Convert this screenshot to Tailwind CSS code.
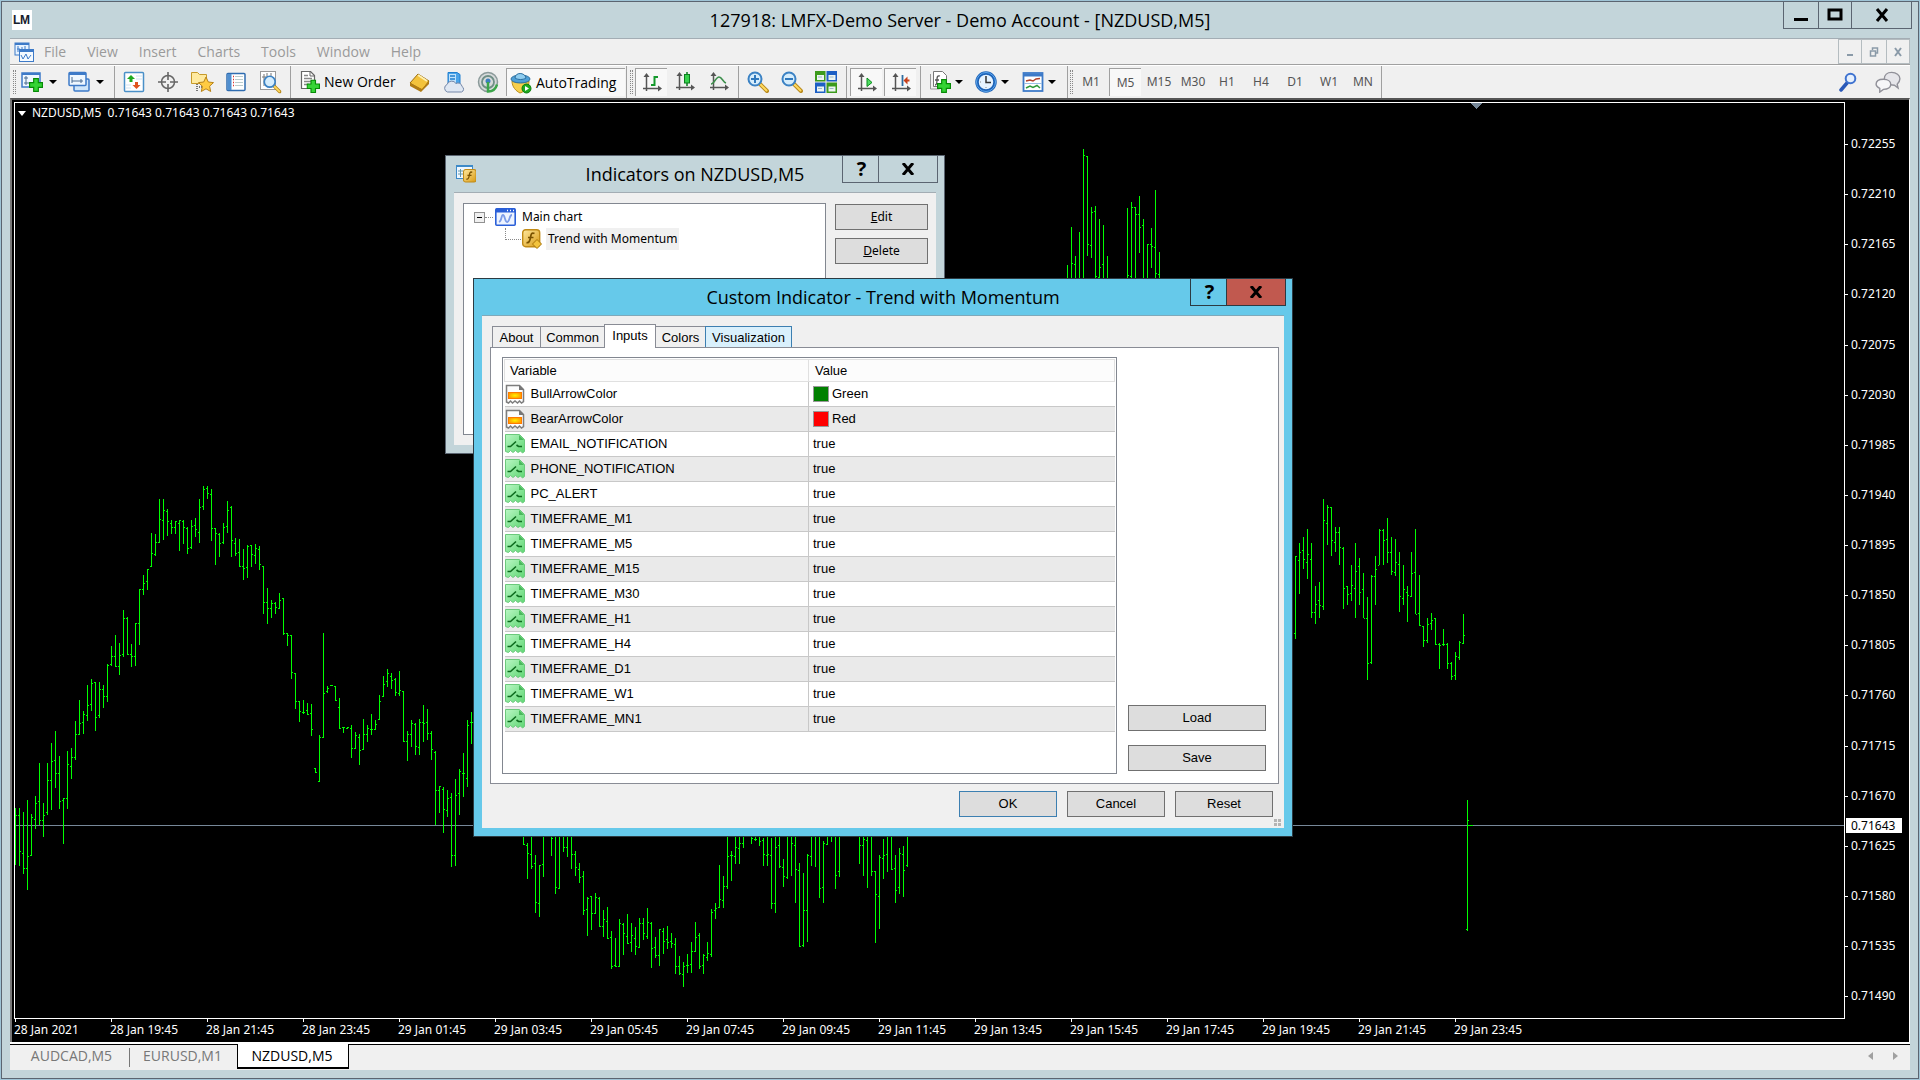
<!DOCTYPE html>
<html lang="en">
<head>
  <meta charset="UTF-8" />
  <meta name="viewport" content="width=device-width, initial-scale=1.0" />
  <title>127918: LMFX-Demo Server - Demo Account - [NZDUSD,M5]</title>
  <script src="https://cdn.jsdelivr.net/npm/@tailwindcss/browser@4"></script>
</head>
<body class="h-screen overflow-hidden bg-[#9fc4d6] p-px font-['Open_Sans',sans-serif] text-black">

  <!-- Shared icon shapes -->
  <svg class="absolute h-0 w-0">
    <defs>
      <linearGradient id="gold" x1="0" y1="0" x2="1" y2="1"><stop offset="0" stop-color="#ffe9a0" /><stop offset="1" stop-color="#d99a12" /></linearGradient>
      <linearGradient id="leaf" x1="0" y1="0" x2="1" y2="1"><stop offset="0" stop-color="#b9f7c4" /><stop offset="1" stop-color="#5fd673" /></linearGradient>
      <radialGradient id="hot"><stop offset="0" stop-color="#fff200" /><stop offset="1" stop-color="#ff9d00" /></radialGradient>
    </defs>
    <symbol id="plus" viewBox="0 0 12 12"><path d="M4 .5h4V4h3.500v4H8v3.500H4V8H.5V4H4z" fill="#35d435" stroke="#078a07" /></symbol>
    <symbol id="axes" viewBox="0 0 20 20"><path d="M4.500 3v15M1 15.500h17" stroke="#555" stroke-width="1.500" /><path d="M4.500 0l3 4h-6zM20 15.500l-4 3v-6z" fill="#555" /></symbol>
    <symbol id="glass" viewBox="0 0 22 22"><path d="M13 13l7 7" stroke="#b98a1c" stroke-width="4" stroke-linecap="round" /><path d="M13.500 13.500l6 6" stroke="#ffd95e" stroke-width="2" stroke-linecap="round" /><circle cx="8" cy="8" r="6.500" fill="#d6edfc" stroke="#3b82c4" stroke-width="2" /></symbol>
    <symbol id="color-input" viewBox="0 0 20 20"><path d="M1.500 1.500h13l4 4v12l-2 1.500-2-2-2 2-2.500-2-2.500 2-2-2-2 2-2-1z" fill="#fdfdfd" stroke="#7d7d7d" stroke-width="1.500" /><path d="M14 1v5h5z" fill="#777" /><rect x="3.500" y="8.500" width="13" height="6" fill="url(#hot)" stroke="#ff7a00" /></symbol>
    <symbol id="bool-input" viewBox="0 0 20 20"><path d="M.5.5h14l5 5v12l-2 1.500-2-2-2.500 1.500-2.500-2-2.500 2-2.500-2-2 2-3-1z" fill="url(#leaf)" stroke="#6cc97c" /><path d="M14 1v5h5z" fill="#49b95c" /><path d="M2.500 12.500h3l5.500-5M11.500 11l2 1.500h3.500" fill="none" stroke="#0d6b1e" stroke-width="1.600" /></symbol>
    <symbol id="fx" viewBox="0 0 20 20"><rect x=".7" y=".7" width="17" height="17" rx="3" fill="url(#gold)" stroke="#c08a16" stroke-width="1.400" /><path d="M12.500 4.500c-3-1.500-3.500 1-4 4s-1.500 6-4 5M6 8.500h5.500" fill="none" stroke="#7a5200" stroke-width="1.700" /></symbol>
  </svg>

  <!-- Terminal window -->
  <main class="flex h-full flex-col border border-[#5b6571] bg-[#c3d5da] px-2 pb-2">
    <header class="relative flex h-9 shrink-0 items-center justify-center">
      <svg class="absolute top-2 left-0.5 h-5 w-5" viewBox="0 0 20 20"><rect width="20" height="20" fill="#fff" /><text x="1" y="14" font-family="Liberation Sans" font-weight="bold" font-size="12" fill="#16202c">L</text><text x="8" y="14" font-family="Liberation Sans" font-weight="bold" font-size="12" fill="#16202c">M</text></svg>
      <h1 class="text-lg leading-9">127918: LMFX-Demo Server - Demo Account - [NZDUSD,M5]</h1>
      <div class="absolute -top-px -right-0.5 flex border border-[#5b6571]">
        <button aria-label="Minimize" class="grid h-[26px] w-[35px] place-items-center border-r border-[#5b6571]"><svg class="h-4 w-4" viewBox="0 0 16 16"><path d="M1 11h14v3H1z" /></svg></button>
        <button aria-label="Maximize" class="grid h-[26px] w-[33px] place-items-center border-r border-[#5b6571]"><svg class="h-4 w-4" viewBox="0 0 16 16"><path d="M2 3h12v9H2z" fill="none" stroke="#000" stroke-width="3" /></svg></button>
        <button aria-label="Close" class="grid h-[26px] w-[59px] place-items-center"><svg class="h-4 w-4" viewBox="0 0 16 16"><path d="M3 2l10 12M13 2L3 14" stroke="#000" stroke-width="3" /></svg></button>
      </div>
    </header>

    <section class="flex min-h-0 flex-1 flex-col border-t border-[#a3adb4] bg-[#f0f0f0]">
      <!-- Menu -->
      <nav class="flex h-[26px] shrink-0 items-center border-b border-[#a0a0a0] pl-1 text-sm text-[#9a9a9a]">
        <svg class="mr-2 h-5 w-5" viewBox="0 0 20 20"><rect x="1" y="1" width="14" height="12" fill="#e8f3ff" stroke="#3d7ac8" /><path d="M1 2h14" stroke="#3d7ac8" stroke-width="2" /><path d="M4 4v6M8 5v5M11 4v5M3 7h3M7 8h3" stroke="#3d7ac8" /><rect x="5.500" y="7.500" width="14" height="12" fill="#f4faff" stroke="#3d7ac8" /><path d="M5 9h15" stroke="#3d7ac8" stroke-width="2" /><path d="M7 13l2 4 3-5 2 5 3-4" fill="none" stroke="#3d7ac8" /></svg>
        <div class="flex items-center gap-[21px]">
          <a href="#" class="pl-0.5">File</a><a href="#">View</a><a href="#">Insert</a><a href="#">Charts</a><a href="#">Tools</a><a href="#">Window</a><a href="#">Help</a>
        </div>
        <div class="ml-auto flex self-stretch text-[#8a9aa8]">
          <button aria-label="Minimize chart" class="grid w-6 place-items-center border border-[#b4bcc0]"><svg class="h-2.5 w-2.5" viewBox="0 0 10 10"><path d="M2 7h6v2H2z" fill="currentColor" /></svg></button>
          <button aria-label="Restore chart" class="grid w-6 place-items-center border-y border-[#b4bcc0]"><svg class="h-2.5 w-2.5" viewBox="0 0 10 10"><path d="M3.500 3V1h5v5h-2M1.500 4h5v5h-5z" fill="none" stroke="currentColor" stroke-width="1.500" /></svg></button>
          <button aria-label="Close chart" class="grid w-6 place-items-center border border-[#b4bcc0]"><svg class="h-2.5 w-2.5" viewBox="0 0 10 10"><path d="M2 1l6 8M8 1L2 9" stroke="currentColor" stroke-width="2" /></svg></button>
        </div>
      </nav>

      <!-- Toolbar -->
      <div class="flex h-[33px] shrink-0 items-stretch border-t border-white text-sm">
        <i class="mx-[3px] my-1 w-[3px] border-x border-dotted border-[#888]"></i>
        <button aria-label="New chart" class="flex w-[47px] items-center gap-1 pl-0.5"><svg class="h-[22px] w-[22px]" viewBox="0 0 22 22"><rect x="1" y="2" width="18" height="14" fill="#eef7ff" stroke="#3d7ac8" stroke-width="1.500" /><path d="M1 3h18" stroke="#3d7ac8" stroke-width="2" /><path d="M5 5v9M3 12h10M3 7h4" stroke="#4a6d92" /><use href="#plus" x="8" y="7" width="14" height="14" /></svg><svg class="ml-0.5 h-1 w-2" viewBox="0 0 8 4"><path d="M0 0h8L4 4z" /></svg></button>
        <button aria-label="Profiles" class="flex w-[47px] items-center gap-1 pl-0.5"><svg class="h-[22px] w-[22px]" viewBox="0 0 22 22"><rect x="6" y="8" width="15" height="12" rx="1" fill="#cfe6fa" stroke="#3d7ac8" stroke-width="1.500" /><rect x="1" y="1.500" width="17" height="13" rx="1" fill="#eef7ff" stroke="#3d7ac8" stroke-width="1.500" /><path d="M1 3h17" stroke="#3d7ac8" stroke-width="2" /><path d="M4 6v6M4 10h11M13 8v4" stroke="#4a6d92" /></svg><svg class="ml-0.5 h-1 w-2" viewBox="0 0 8 4"><path d="M0 0h8L4 4z" /></svg></button>
        <i class="mr-0.5 ml-px w-px bg-[#a0a0a0]"></i>
        <button aria-label="Market Watch" class="grid w-[34px] place-items-center"><svg class="h-[22px] w-[22px]" viewBox="0 0 22 22"><rect x="1.500" y="1.500" width="19" height="19" rx="1" fill="#fff" stroke="#4a90c8" stroke-width="1.500" /><path d="M13 5h6M13 8h6M3 14h5M3 17h5" stroke="#cfe3f2" /><path d="M8 4l4 4H9.500v3h-3V8H4z" fill="#1faa1f" /><path d="M13.500 18l-4-4H12v-3h3v3h2.500z" fill="#e0531c" /></svg></button>
        <button aria-label="Crosshair" class="grid w-[34px] place-items-center"><svg class="h-5 w-5" viewBox="0 0 20 20"><circle cx="10" cy="10" r="6.500" fill="none" stroke="#666" stroke-width="1.500" /><path d="M10 0v8M10 12v8M0 10h8M12 10h8" stroke="#666" stroke-width="1.600" /></svg></button>
        <button aria-label="Navigator" class="grid w-[34px] place-items-center"><svg class="h-6 w-6" viewBox="0 0 24 24"><path d="M1.500 2.500h6l2 2h7v9h-15z" fill="#ffeaa0" stroke="#c79a2a" /><path d="M7 14v7M9 17h3" stroke="#777" stroke-dasharray="1 1" stroke-width="2" /><path d="M16 7l2.300 5 5.200.600-3.900 3.600 1.100 5.300-4.700-2.700-4.700 2.700 1.100-5.300-3.900-3.600 5.200-.6z" fill="#ffcb42" stroke="#b8841a" /></svg></button>
        <button aria-label="Terminal" class="grid w-[34px] place-items-center"><svg class="h-5 w-5" viewBox="0 0 20 20"><rect x="1" y="1.500" width="18" height="17" rx="1" fill="#fff" stroke="#2f6cb0" stroke-width="1.500" /><path d="M3.500 2v16" stroke="#4f8fd0" stroke-width="4" /><path d="M7 4.500h1M7 7.500h1M7 10.500h1M7 13.500h1" stroke="#d33" stroke-width="1.500" /><path d="M9 4.500h8M9 7.500h8M9 10.500h8M9 13.500h8" stroke="#bcc" /></svg></button>
        <button aria-label="Strategy Tester" class="grid w-[34px] place-items-center"><svg class="h-6 w-6" viewBox="0 0 24 24"><rect x="2.500" y="1.500" width="15" height="18" fill="#fff" stroke="#999" /><path d="M6 4v12M9 3v6M13 3v5M4 7h4" stroke="#777" /><g transform="translate(5 5) scale(.84)"><use href="#glass" width="22" height="22" /></g></svg></button>
        <i class="mr-0.5 ml-[3px] w-px bg-[#a0a0a0]"></i>
        <button class="flex w-[110px] items-center gap-1 pl-[7px] whitespace-nowrap"><svg class="h-[22px] w-5 shrink-0" viewBox="0 0 20 22"><path d="M1.500.5h9l4 4v13h-13z" fill="#fff" stroke="#666" stroke-width="1.200" /><path d="M10 1v4h4" fill="none" stroke="#666" /><path d="M4 4.500h4M4 7.500h8M4 10.500h8M4 13.500h5" stroke="#888" stroke-width="1.500" /><use href="#plus" x="6.500" y="8.500" width="13.500" height="13.500" /></svg>New Order</button>
        <button aria-label="MetaEditor" class="grid w-[34px] place-items-center"><svg class="h-[22px] w-[22px]" viewBox="0 0 22 22"><path d="M1 12l8-9 11 7-7 9z" fill="#f3c33c" stroke="#9a6c10" /><path d="M1 12v3l11 6 8-8v-3l-7 8z" fill="#b07c14" /><path d="M9 4l9 6" stroke="#fff0b0" stroke-width="2" /></svg></button>
        <button aria-label="Virtual Hosting" class="grid w-[34px] place-items-center"><svg class="h-[22px] w-[22px]" viewBox="0 0 22 22"><path d="M5 1.500h9l3 2v11H5z" fill="#4aa3e8" stroke="#1f7fd0" /><path d="M6 3h7v9H6z" fill="#bfe2fb" /><path d="M7 5h5M7 8h5" stroke="#1f7fd0" stroke-width="1.500" /><path d="M4.500 21a4 4 0 01-.5-7.500 5 5 0 019-1 4 4 0 016 3 3 3 0 01-.5 5.500z" fill="#dfe7f2" stroke="#7487a8" /></svg></button>
        <button aria-label="Signals" class="grid w-[34px] place-items-center"><svg class="h-[22px] w-[22px]" viewBox="0 0 22 22"><circle cx="11" cy="11" r="9.500" fill="#d7dadb" stroke="#8b9a9a" stroke-width="1.500" /><circle cx="11" cy="11" r="6" fill="none" stroke="#6f8f86" stroke-width="1.800" /><circle cx="11" cy="10" r="2.500" fill="#3d7fbf" /><path d="M11 11v9.500c5 0 8-3 9-7" fill="none" stroke="#3ba54a" stroke-width="2.500" /></svg></button>
        <button class="my-0.5 ml-px flex w-[119px] items-center gap-1 border-t border-l border-[#a0a0a0] bg-[#f8f8f8] pl-[3px] whitespace-nowrap"><svg class="h-6 w-[22px] shrink-0" viewBox="0 0 22 24"><path d="M2 10c3 2 15 2 17 0 0 6-3 10-9 12-4-2-8-6-8-12z" fill="#f6cf4c" stroke="#b98f1f" /><ellipse cx="10.500" cy="8" rx="9.500" ry="4" fill="#4d9fd6" stroke="#2c6f9f" /><path d="M5 7c0-6 10-6 11 0-3 2-8 2-11 0z" fill="#8fcdf0" stroke="#2c6f9f" /><circle cx="16.500" cy="17.500" r="4.500" fill="#1faa1f" stroke="#0c7d0c" /><path d="M15 15l4 2.500-4 2.500z" fill="#fff" /></svg>AutoTrading</button>
        <i class="mr-0.5 ml-px w-px bg-[#a0a0a0]"></i>
        <i class="mx-px my-1 w-[3px] border-x border-dotted border-[#888]"></i>
        <button aria-label="Bar chart" class="my-0.5 mr-px ml-px grid w-8 place-items-center border-t border-l border-[#a0a0a0] bg-[#f8f8f8]"><svg class="h-5 w-5" viewBox="0 0 20 20"><use href="#axes" /><path d="M12.500 3v10M12.500 4H16M9 12h3.500" stroke="#159a2c" stroke-width="2" /></svg></button>
        <button aria-label="Candlesticks" class="grid w-[34px] place-items-center"><svg class="h-5 w-5" viewBox="0 0 20 20"><use href="#axes" /><path d="M12 0v14" stroke="#0a7d1e" stroke-width="1.500" /><rect x="9.500" y="2.500" width="5" height="8.500" fill="#36d14c" stroke="#0a7d1e" /></svg></button>
        <button aria-label="Line chart" class="grid w-[34px] place-items-center"><svg class="h-5 w-5" viewBox="0 0 20 20"><use href="#axes" /><path d="M2 12c3 0 5-7 8-7s4 5 7 6" fill="none" stroke="#3d8f4c" stroke-width="1.600" /></svg></button>
        <i class="mr-0.5 ml-0.5 w-px bg-[#a0a0a0]"></i>
        <button aria-label="Zoom in" class="grid w-[34px] place-items-center"><svg class="h-[22px] w-[22px]" viewBox="0 0 22 22"><use href="#glass" /><path d="M8 4v8M4 8h8" stroke="#2f78bd" stroke-width="2" /></svg></button>
        <button aria-label="Zoom out" class="grid w-[34px] place-items-center"><svg class="h-[22px] w-[22px]" viewBox="0 0 22 22"><use href="#glass" /><path d="M4 8h8" stroke="#2f78bd" stroke-width="2" /></svg></button>
        <button aria-label="Tile windows" class="grid w-[34px] place-items-center"><svg class="h-[22px] w-[22px]" viewBox="0 0 22 22"><path d="M0 0h10.500v10.500H0zM11.500 11.500H22V22H11.500z" fill="#3c9a1c" /><path d="M11.500 0H22v10.500H11.500zM0 11.500h10.500V22H0z" fill="#1c5fc4" /><path d="M2 4h7v5H2zM13.500 4h7v5h-7zM2 15.500h7v5H2zM13.500 15.500h7v5h-7z" fill="#edf5f2" /><path d="M3 6h4M14.500 6h4M3 17.500h4M14.500 17.500h4" stroke="#9db8c8" /></svg></button>
        <i class="mr-0.5 ml-[3px] w-px bg-[#a0a0a0]"></i>
        <button aria-label="Auto scroll" class="mx-px my-0.5 grid w-8 place-items-center border-t border-l border-[#a0a0a0] bg-[#f8f8f8]"><svg class="h-5 w-5" viewBox="0 0 20 20"><use href="#axes" /><path d="M10 5l5 4.500-5 4z" fill="#4fdc62" stroke="#0a8d1e" /></svg></button>
        <button aria-label="Chart shift" class="mx-px my-0.5 grid w-8 place-items-center border-t border-l border-[#a0a0a0] bg-[#f8f8f8]"><svg class="h-5 w-5" viewBox="0 0 20 20"><use href="#axes" /><path d="M11.500 2v11" stroke="#2f6ca0" stroke-width="1.800" /><path d="M18.500 7.500H15" stroke="#c8401a" stroke-width="2" /><path d="M12.500 7.500l4-4v8z" fill="#c8401a" /></svg></button>
        <i class="mr-0.5 ml-[3px] w-px bg-[#a0a0a0]"></i>
        <button aria-label="Indicators" class="flex w-[46px] items-center gap-1 pl-1.5"><svg class="h-[22px] w-[22px] shrink-0" viewBox="0 0 22 22"><path d="M4.500.5h9l4 4v11h-13z" fill="#fff" stroke="#777" /><path d="M1.500 3v15h9" fill="none" stroke="#999" /><path d="M11 5c-3-1-3 2-3 4s0 5-2 5M6 9h4" fill="none" stroke="#555" stroke-width="1.300" /><use href="#plus" x="8" y="8" width="14" height="14" /></svg><svg class="h-1 w-2 shrink-0" viewBox="0 0 8 4"><path d="M0 0h8L4 4z" /></svg></button>
        <button aria-label="Periods" class="flex w-[47px] items-center gap-1 pl-1.5"><svg class="h-[22px] w-[22px] shrink-0" viewBox="0 0 22 22"><circle cx="11" cy="11" r="9" fill="#e6f3ff" stroke="#1d63b8" stroke-width="3.500" /><circle cx="11" cy="11" r="9.500" fill="none" stroke="#5fa8ee" /><path d="M11 5v6.500h5" fill="none" stroke="#333" stroke-width="1.500" /><path d="M5 11h1M11 16v1" stroke="#888" /></svg><svg class="h-1 w-2 shrink-0" viewBox="0 0 8 4"><path d="M0 0h8L4 4z" /></svg></button>
        <button aria-label="Templates" class="flex w-[47px] items-center gap-1 pl-1.5"><svg class="h-[22px] w-[22px] shrink-0" viewBox="0 0 22 22"><rect x="1.500" y="2" width="19" height="18" fill="#fff" stroke="#3d7ac8" stroke-width="1.800" /><path d="M1 4h20" stroke="#3d7ac8" stroke-width="3" /><path d="M4 10l4-1 3 1 3-2 4-.5" fill="none" stroke="#b3402a" stroke-width="1.500" /><path d="M2 12.500h18" stroke="#9cc0e4" /><path d="M4 17l4-2 3 1.500 4-2 3 2.500" fill="none" stroke="#2f9a3a" stroke-width="1.500" /></svg><svg class="h-1 w-2 shrink-0" viewBox="0 0 8 4"><path d="M0 0h8L4 4z" /></svg></button>
        <i class="mr-0.5 ml-1 w-px bg-[#a0a0a0]"></i>
        <i class="mr-px my-1 w-[3px] border-x border-dotted border-[#888]"></i>
        <div id="periods" class="flex font-['Noto_Sans',sans-serif] text-xs text-[#555]"></div>
        <i class="ml-px w-px bg-[#a0a0a0]"></i>
        <div class="ml-auto flex items-center gap-4 pr-2">
          <button aria-label="Search"><svg class="h-5 w-5" viewBox="0 0 20 20"><path d="M9 11l-6 7" stroke="#2a59b8" stroke-width="3.500" stroke-linecap="round" /><circle cx="12.500" cy="6.500" r="4.800" fill="#e6f0fd" stroke="#3f73d0" stroke-width="2" /></svg></button>
          <button aria-label="Chat"><svg class="h-[22px] w-7" viewBox="0 0 28 24"><path d="M18 1.500c5 0 9 3 9 7 0 3-2 5-3 6l1 4-4-3c-7 0-11-3-11-7s3-7 8-7z" fill="#e6e6ea" stroke="#909098" stroke-width="1.500" /><path d="M9 9c5 0 8 2.500 8 5.500S14 20 9 20l-4 3v-4c-2-1-4-2.500-4-4.500C1 11 4 9 9 9z" fill="#f6f6f8" stroke="#909098" stroke-width="1.500" /></svg></button>
        </div>
      </div>

      <!-- Chart -->
      <div class="flex min-h-0 flex-1 flex-col border-t-2 border-r border-l-2 border-t-[#555] border-r-white border-l-[#777] bg-black pt-0.5 pl-0.5 font-['Noto_Sans',sans-serif] text-xs text-white">
        <div class="flex min-h-0 flex-1">
          <div class="relative min-w-0 flex-1 overflow-hidden border border-white">
            <svg class="absolute inset-0 h-full w-full" shape-rendering="crispEdges">
              <path d="M0 722.500h4000" stroke="#778899" />
              <path id="bars" fill="none" stroke="#00ff00" />
              <path d="M1456 0h11l-5.500 6z" fill="#778899" />
            </svg>
            <p class="relative flex items-center gap-1.5 pl-[3px] leading-5"><svg class="h-[5px] w-2" viewBox="0 0 8 5"><path d="M0 0h8L4 5z" fill="#fff" /></svg><span>NZDUSD,M5&nbsp; 0.71643 0.71643 0.71643 0.71643</span></p>
          </div>
          <div id="prices" class="relative w-16 shrink-0"></div>
        </div>
        <div id="dates" class="flex h-[23px] shrink-0 overflow-hidden"></div>
      </div>

      <!-- Chart tabs -->
      <div class="flex h-7 shrink-0 border-t-2 border-white text-sm text-[#777]">
        <div class="flex flex-1 border-t border-black">
          <button class="w-[119px] pr-1 pl-2 pb-1 leading-5">AUDCAD,M5</button>
          <i class="my-[3px] w-px bg-[#777]"></i>
          <button class="w-[107px] pr-0.5 pb-1 leading-5">EURUSD,M1</button>
          <button class="-mt-px mb-px w-[112px] border-x border-b-2 border-black bg-white pr-0.5 text-black">NZDUSD,M5</button>
          <div class="ml-auto flex items-center gap-[18px] pr-3 pb-1">
            <button aria-label="Scroll left"><svg class="h-2 w-1.5" viewBox="0 0 6 8"><path d="M5 0v8L0 4z" fill="#a0a0a0" /></svg></button>
            <button aria-label="Scroll right"><svg class="h-2 w-1.5" viewBox="0 0 6 8"><path d="M1 0v8l5-4z" fill="#a0a0a0" /></svg></button>
          </div>
        </div>
      </div>
    </section>
  </main>

  <!-- Indicators list dialog -->
  <section class="absolute top-[155px] left-[445px] flex h-[299px] w-[500px] flex-col border border-[#5b6571] bg-[#c3d5da] px-2 pb-2">
    <header class="relative flex h-9 shrink-0 items-center justify-center">
      <svg class="absolute top-2 left-0.5 h-5 w-5" viewBox="0 0 20 20"><rect x=".5" y="1.500" width="16" height="13" fill="#eef7ff" stroke="#3d8ac8" /><path d="M0 2h17" stroke="#3d8ac8" stroke-width="2" /><path d="M4.500 5v8M2 7h5M2 10h5" stroke="#69a" /><g transform="translate(7 5) scale(.74)"><use href="#fx" width="20" height="20" /></g></svg>
      <h2 class="text-lg leading-9">Indicators on NZDUSD,M5</h2>
      <div class="absolute -top-px -right-0.5 flex border border-[#5b6571]">
        <button aria-label="Help" class="w-9 border-r border-[#5b6571] pl-0.5 text-xl leading-[26px] font-bold">?</button>
        <button aria-label="Close" class="grid w-[58px] place-items-center"><svg class="h-3 w-4" viewBox="0 0 16 12"><path d="M3 0l10 12M13 0L3 12" stroke="#000" stroke-width="3" /></svg></button>
      </div>
    </header>
    <div class="flex flex-1 gap-[9px] border-t border-[#a3adb4] bg-[#f0f0f0] py-2.5 pr-2 pl-[9px] font-['Noto_Sans',sans-serif] text-xs">
      <ul class="flex-1 border border-[#828790] bg-white pt-0.5 pl-2.5">
        <li class="flex h-[22px] items-center">
          <button aria-label="Collapse" class="grid h-[11px] w-[11px] place-items-center border border-[#919191] bg-[#f0f0f0]"><i class="h-px w-[5px] bg-black"></i></button>
          <i class="w-2 border-t border-dotted border-[#888]"></i>
          <svg class="ml-0.5 h-[18px] w-[21px]" viewBox="0 0 21 18"><rect x=".8" y=".8" width="19.400" height="16.400" rx="1" fill="#eef4ff" stroke="#2a5fd8" stroke-width="1.600" /><path d="M1 2.500h19" stroke="#2a5fd8" stroke-width="4" /><path d="M12 2.500h1M15 2.500h1M18 2.500h1" stroke="#fff" stroke-width="1.500" /><path d="M4 14c3-1 2-7 4-7s2 8 4.500 7S14 7 17 7" fill="none" stroke="#7c9ce8" stroke-width="1.800" /></svg>
          <span class="pl-1.5">Main chart</span>
        </li>
        <li class="flex h-[22px] items-center pl-[31px]">
          <i class="h-3 w-4 self-start border-b border-l border-dotted border-[#888]"></i>
          <svg class="ml-px h-5 w-5" viewBox="0 0 20 20"><use href="#fx" /><path d="M15 10.500l4.500 4.500-4.500 4.500-4.500-4.500z" fill="#f3c33c" stroke="#a87408" /></svg>
          <span class="ml-1 bg-[#f0f0f0] px-0.5 leading-[22px]">Trend with Momentum</span>
        </li>
      </ul>
      <div class="flex w-[93px] flex-col gap-2 pt-px">
        <button class="h-[26px] border border-[#707070] bg-[#ddd]"><u>E</u>dit</button>
        <button class="h-[26px] border border-[#707070] bg-[#ddd]"><u>D</u>elete</button>
      </div>
    </div>
  </section>

  <!-- Custom indicator dialog -->
  <section class="absolute top-[278px] left-[473px] w-[820px] border border-[#2c3a42] bg-[#66c9ea] px-2 pb-2">
    <header class="relative flex h-9 items-center justify-center">
      <h2 class="text-lg leading-9">Custom Indicator - Trend with Momentum</h2>
      <div class="absolute -top-px -right-0.5 flex border border-[#2c3a42]">
        <button aria-label="Help" class="w-9 border-r border-[#2c3a42] pl-0.5 text-xl leading-[26px] font-bold">?</button>
        <button aria-label="Close" class="grid w-[58px] place-items-center bg-[#c1594f]"><svg class="h-3 w-4" viewBox="0 0 16 12"><path d="M3 0l10 12M13 0L3 12" stroke="#000" stroke-width="3" /></svg></button>
      </div>
    </header>
    <div class="relative border-t border-[#7fa9ba] bg-[#f0f0f0] pt-2 pr-[5px] pb-[11px] pl-2 font-['Liberation_Sans',sans-serif] text-[13px]">
      <div class="flex h-[23px] items-end pl-0.5 leading-[21px]">
        <button class="h-[21px] w-12 border-t border-l border-[#898c95]">About</button>
        <button class="h-[21px] w-16 border-t border-l border-[#898c95]">Common</button>
        <button class="relative z-10 -mb-px h-6 w-[52px] border-x border-t border-[#898c95] bg-white pb-0.5">Inputs</button>
        <button class="h-[21px] w-[49px] border-t border-[#898c95]">Colors</button>
        <button class="h-[21px] w-[87px] border-x border-t border-[#3c7fb1] bg-[#d9f0fc]">Visualization</button>
      </div>
      <div class="flex gap-[11px] border border-[#898c95] bg-white py-[9px] pr-3 pl-[11px]">
        <div class="h-[417px] flex-1 border border-[#828790] p-px">
          <table class="w-full table-fixed border-collapse text-left">
            <thead>
              <tr class="h-[22px] border border-[#e0e0e0] bg-[#fcfcfc]">
                <th class="w-[304px] border-r border-[#e0e0e0] p-0 pl-[5px] font-normal">Variable</th>
                <th class="p-0 pl-1.5 font-normal">Value</th>
              </tr>
            </thead>
            <tbody id="inputs"></tbody>
          </table>
        </div>
        <div class="flex w-[138px] flex-col justify-end gap-3.5 pb-[3px]">
          <button class="h-[26px] border border-[#707070] bg-[#ddd]">Load</button>
          <button class="h-[26px] border border-[#707070] bg-[#ddd]">Save</button>
        </div>
      </div>
      <div class="flex justify-end gap-2.5 pt-[7px] pr-1.5">
        <button class="h-[26px] w-[98px] border border-[#3c7fb1] bg-[#ddd]">OK</button>
        <button class="h-[26px] w-[98px] border border-[#707070] bg-[#ddd]">Cancel</button>
        <button class="h-[26px] w-[98px] border border-[#707070] bg-[#ddd]">Reset</button>
      </div>
      <svg class="absolute right-[3px] bottom-0.5 h-[7px] w-[7px]" viewBox="0 0 7 7"><path d="M0 0h3v3H0zM4 0h3v3H4zM0 4h3v3H0zM4 4h3v3H4z" fill="#b4b4b4" /></svg>
    </div>
  </section>

  <script>
    // Timeframe buttons
    document.getElementById("periods").innerHTML = ["M1", "M5", "M15", "M30", "H1", "H4", "D1", "W1", "MN"].map((p) =>
      p === "M5"
        ? `<button class="mx-px my-0.5 w-8 border-t border-l border-[#a0a0a0] bg-[#f8f8f8]">${p}</button>`
        : `<button class="w-[34px]">${p}</button>`
    ).join("");

    // Price axis, one label every 45 points
    const prices = document.getElementById("prices");
    for (let i = 0; i < 18; i++) {
      const y = Math.round(42 + i * 50.13);
      const price = (0.72255 - i * 0.00045).toFixed(5);
      prices.innerHTML += `<div class="absolute left-0 flex h-4 -translate-y-2 items-center gap-[3px] leading-4" style="top:${y}px"><i class="h-px w-[3px] bg-white"></i>${price}</div>`;
    }
    prices.innerHTML += `<div class="absolute left-px h-[15px] w-14 -translate-y-[7px] bg-white pl-[5px] leading-[15px] text-black" style="top:723px">0.71643</div>`;

    // Time axis
    const times = ["28 Jan 2021", "28 Jan 19:45", "28 Jan 21:45", "28 Jan 23:45", "29 Jan 01:45", "29 Jan 03:45", "29 Jan 05:45", "29 Jan 07:45",
      "29 Jan 09:45", "29 Jan 11:45", "29 Jan 13:45", "29 Jan 15:45", "29 Jan 17:45", "29 Jan 19:45", "29 Jan 21:45", "29 Jan 23:45"];
    document.getElementById("dates").innerHTML = times.map((t) =>
      `<div class="w-24 shrink-0 whitespace-nowrap"><i class="ml-px block h-[3px] w-px bg-white"></i><span class="block leading-4">${t}</span></div>`
    ).join("");

    // Indicator inputs
    const flags = ["EMAIL_NOTIFICATION", "PHONE_NOTIFICATION", "PC_ALERT", "TIMEFRAME_M1", "TIMEFRAME_M5", "TIMEFRAME_M15", "TIMEFRAME_M30",
      "TIMEFRAME_H1", "TIMEFRAME_H4", "TIMEFRAME_D1", "TIMEFRAME_W1", "TIMEFRAME_MN1"];
    const inputs = [
      { name: "BullArrowColor", value: "Green", color: "#008000" },
      { name: "BearArrowColor", value: "Red", color: "#ff0000" },
      ...flags.map((name) => ({ name, value: "true" })),
    ];
    document.getElementById("inputs").innerHTML = inputs.map((p) => `
      <tr class="h-[25px] border-b border-[#c8c8c8] even:bg-[#eaeaea]">
        <td class="border-r border-[#c8c8c8] p-0"><div class="flex items-center gap-1.5"><svg class="h-5 w-5"><use href="#${p.color ? "color-input" : "bool-input"}" /></svg>${p.name}</div></td>
        <td class="p-0 pl-1"><div class="flex items-center gap-[3px]">${p.color ? `<i class="h-4 w-4 border border-[#999]" style="background:${p.color}"></i>` : ""}${p.value}</div></td>
      </tr>`).join("");

    // OHLC bars as high,low,open,close measured down from `top`; `unit` is how many steps make a pixel.
    // 0 means no tick on that side, _ is a bar that is not drawn.
    const series = [
      { start: 0, top: 357, unit: 3, data: `
        1045,1215,0,1066 1044,1218,1066,1174 1056,1242,1180,1225 1020,1290,1225,1189 1062,1190,1187,1072 1008,1107,1078,1030
        909,1097,1024,1081 1029,1131,1081,1066 909,1065,1057,961 849,1050,961,904 813,984,901,940 888,1047,940,1024
        1014,1152,1021,1015 873,1047,1015,913 864,957,919,892 783,900,892,823 720,825,823,790 753,822,787,763
        675,783,766,736 657,753,733,670 666,813,667,772 666,774,766,688 675,744,688,709 612,726,709,616
        558,618,613,589 525,621,589,619 549,645,619,586 450,591,583,475 471,585,475,583 552,621,583,589
        489,618,589,490 387,555,490,388 345,405,388,370 327,390,364,328 219,321,319,280 222,288,283,247
        117,249,247,178 117,240,181,151 147,228,154,184 180,222,190,202 183,222,202,184 180,273,190,181
        180,252,184,202 201,282,205,265 180,267,262,199 174,231,196,208 117,249,217,142 78,150,139,88
        78,117,85,100 87,243,103,205 204,315,205,220 219,291,223,250 189,252,247,202 123,219,199,151
        138,291,142,241 234,288,250,280 237,321,277,319 267,360,319,325 255,354,322,259 255,321,256,283
        252,312,286,265 258,330,268,313 318,462,319,427 384,492,427,445 420,474,445,430 426,462,430,442
        399,447,445,421 414,525,415,520 519,558,520,526 525,657,526,637 639,747,640,724 723,786,724,754
        720,762,757,757 729,765,751,763 732,828,760,808 924,939,925,937 825,966,964,832 519,834,832,700
        678,699,694,685 675,678,676,676 678,723,679,721 714,807,742,805 801,819,802,802 801,807,805,802
        795,894,805,865 816,867,865,826 822,915,832,871 777,870,868,823 795,846,823,805 762,825,808,808
        780,810,808,793 705,780,778,724 648,711,709,673 627,681,664,640 639,687,649,661 654,708,658,697
        633,708,700,691 693,846,694,844 813,903,844,823 780,861,823,790 789,885,793,859 777,885,862,787
        735,846,787,790 747,840,787,820 813,900,820,868 873,1095,877,991 978,1059,991,979 981,1119,988,1048
        990,1071,1051,1015 999,1221,1012,1186 957,1218,1186,1006 927,1065,1000,934 879,1011,940,940 780,981,955,796
        756,852,787,787` },
      { start: 127, top: 717, unit: 3, data: `
        0,75,0,73 69,177,76,100 0,147,103,139 105,279,130,247 135,291,250,136 0,171,133,0 _ 0,108,0,55 0,222,0,202
        0,207,205,0 0,96,0,82 0,111,82,0 0,147,0,103 93,168,103,142 129,189,148,172 153,285,169,271 231,348,268,235
        228,330,229,280 219,282,280,232 231,321,235,319 270,351,319,298 261,357,304,355 333,447,352,439 354,441,436,439
        297,441,439,310 309,405,313,340 282,372,349,370 309,396,367,346 321,405,355,379 294,384,382,310 294,360,310,340
        264,357,349,307 306,444,310,385 351,414,382,406 327,438,406,328 324,402,334,364 318,387,358,367 339,384,364,370
        354,462,373,439 408,465,439,460 426,501,463,439 402,459,436,436 366,459,433,394 306,396,394,352 339,447,346,439
        402,462,436,406 366,423,412,400 267,411,403,277 249,297,271,265 135,264,262,238 168,264,241,199 0,207,199,109
        93,183,106,106 0,132,109,82 0,132,85,70 0,84,70,0 _ 0,72,0,55 0,63,58,58 0,78,0,64 54,138,61,103 0,138,106,103
        54,267,106,250 0,279,250,82 0,144,76,139 117,201,142,169 0,177,172,0 0,168,0,70 0,249,76,148 129,381,151,379
        159,381,376,271 102,366,271,106 0,138,109,0 0,141,0,0 0,234,0,205 63,249,202,70 0,75,73,0 0,66,0,0 0,207,0,166
        0,171,154,0 _ _ _ _ 0,132,0,76 0,168,76,58 0,204,61,0 0,168,0,154 153,369,154,223 105,327,229,112 57,177,115,106
        0,156,103,0 0,150,0,148 105,249,145,211 84,222,202,100 78,231,103,151 0,141,136,0` },
      { start: 263, top: 37, unit: 3, data: `
        375,420,0,0 261,420,0,370 348,420,373,0 276,420,0,0 27,420,0,46 48,348,49,313 201,354,316,217 198,420,214,409
        237,420,412,382 255,420,373,0 348,420,0,0 _ _ _ _ 204,420,0,406 186,420,409,202 201,420,202,223 168,339,223,262
        237,420,256,0 312,420,0,313 264,384,313,319 150,420,322,400 336,420,403,0` },
      { start: 320, top: 357, unit: 2.53, data: `
        243,455,438,244 212,341,254,234 197,278,229,251 175,303,259,238 210,400,251,387 321,415,385,365 311,402,355,368
        99,382,370,152 116,217,160,121 119,245,120,203 172,235,208,183 172,266,183,221 222,377,223,324 319,367,321,340
        266,357,337,317 212,402,325,281 248,367,269,335 286,402,327,400 349,559,400,514 291,517,512,296 243,367,296,277
        175,268,266,178 175,266,178,203 147,263,200,234 197,293,234,282 200,296,284,259 235,387,264,345 266,369,350,327
        319,410,335,342 235,349,345,286 177,391,284,390 293,422,388,418 420,475,421,456 400,464,456,415 389,432,413,405
        400,470,401,468 465,529,468,470 430,473,468,467 465,529,466,514 513,559,514,547 488,559,545,496 460,506,499,461
        392,468,464,443 862,1194,1187,911` },
    ];

    let path = "M1453 722.5h5";
    series.forEach(({ start, top, unit, data }) => {
      const y = (v) => top + Math.floor(v / unit);
      data.trim().split(/\s+/).forEach((bar, i) => {
        if (bar === "_") return;
        const [high, low, open, close] = bar.split(",").map(Number);
        const x = (start + i) * 4;
        path += `M${x + 0.5} ${y(high)}V${y(low)}`;
        if (open) path += `M${x - 1} ${y(open) + 0.5}h1`;
        if (close) path += `M${x + 1} ${y(close) + 0.5}h1`;
      });
    });
    document.getElementById("bars").setAttribute("d", path);
  </script>
</body>
</html>
